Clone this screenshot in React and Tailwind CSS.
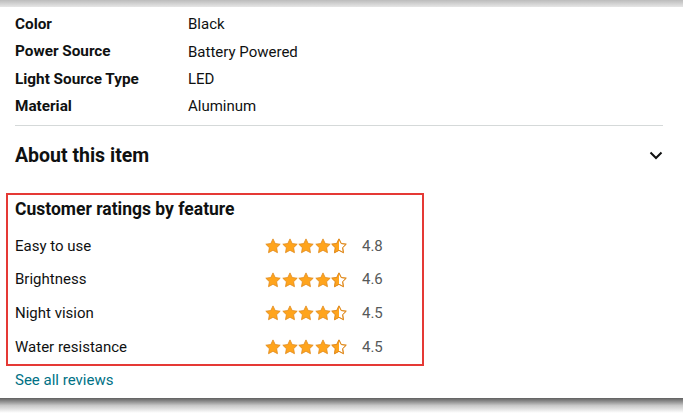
import React from "react";

const font = { fontFamily: 'Roboto, "Liberation Sans", Arial, sans-serif' };

function Star({ kind }) {
  const d = "M8 0.9l2.2 4.6 5 0.7-3.6 3.5 0.9 5-4.5-2.4-4.5 2.4 0.9-5L0.8 6.2l5-0.7z";
  const id = "half-clip";
  return (
    <svg width="16.6" height="16" viewBox="0 0 16.6 16" className="block">
      <defs>
        <clipPath id={id}>
          <rect x="0" y="0" width="8" height="16" />
        </clipPath>
      </defs>
      {kind === "full" ? (
        <path d={d} fill="#FFA41C" stroke="#E08A1E" strokeWidth="0.8" strokeLinejoin="round" />
      ) : (
        <>
          <path d={d} fill="#FFFFFF" stroke="#E08A1E" strokeWidth="0.9" strokeLinejoin="round" />
          <path d={d} fill="#FFA41C" clipPath={`url(#${id})`} />
          <path d={d} fill="none" stroke="#E08A1E" strokeWidth="0.9" strokeLinejoin="round" />
        </>
      )}
    </svg>
  );
}

function Stars() {
  return (
    <div className="flex items-center">
      <Star kind="full" />
      <Star kind="full" />
      <Star kind="full" />
      <Star kind="full" />
      <Star kind="half" />
    </div>
  );
}

const specs = [
  ["Color", "Black"],
  ["Power Source", "Battery Powered"],
  ["Light Source Type", "LED"],
  ["Material", "Aluminum"],
];

const ratings = [
  ["Easy to use", "4.8"],
  ["Brightness", "4.6"],
  ["Night vision", "4.5"],
  ["Water resistance", "4.5"],
];

export default function App() {
  return (
    <div className="w-[683px] h-[415px] bg-white overflow-hidden text-[#0f1111]" style={font}>
      <div className="h-[7px] bg-gradient-to-b from-[#bcbcbc] to-[#e6e6e6]" />
      <div className="h-[391px] bg-white pt-[4px]">
        <div className="pl-[15px]">
          {specs.map(([k, v]) => (
            <div key={k} className="flex h-[27.3px] items-center text-[15px]">
              <div className="w-[173px] font-bold text-[15.3px]">{k}</div>
              <div>{v}</div>
            </div>
          ))}
        </div>
        <div className="mt-[5px] ml-[15px] w-[648px] h-px bg-[#d5d9d9]" />
        <div className="flex h-[60px] items-center justify-between pl-[15px] pr-[20px] pb-[2px]">
          <div className="text-[19.5px] font-bold">About this item</div>
          <svg width="14" height="9" viewBox="0 0 14 9">
            <path d="M1.5 1.5l5.5 5.5 5.5-5.5" fill="none" stroke="#0f1111" strokeWidth="2" />
          </svg>
        </div>
        <div className="mt-[7px] ml-[6px] w-[418px] border-2 border-[#e53935] px-[7px]">
          <div className="h-[34px] pb-[6px] flex items-center text-[17.5px] font-bold">Customer ratings by feature</div>
          {ratings.map(([k, v]) => (
            <div key={k} className="flex h-[33.7px] items-center text-[15px]">
              <div className="w-[250px]">{k}</div>
              <Stars />
              <div className="ml-[14px] text-[#565959]">{v}</div>
            </div>
          ))}
        </div>
        <div className="h-[28px] flex items-center pl-[15px] text-[15px] text-[#007185]">See all reviews</div>
      </div>
      <div className="h-[15px] bg-gradient-to-b from-[#606060] via-[#c8c8c8] to-white" />
    </div>
  );
}
